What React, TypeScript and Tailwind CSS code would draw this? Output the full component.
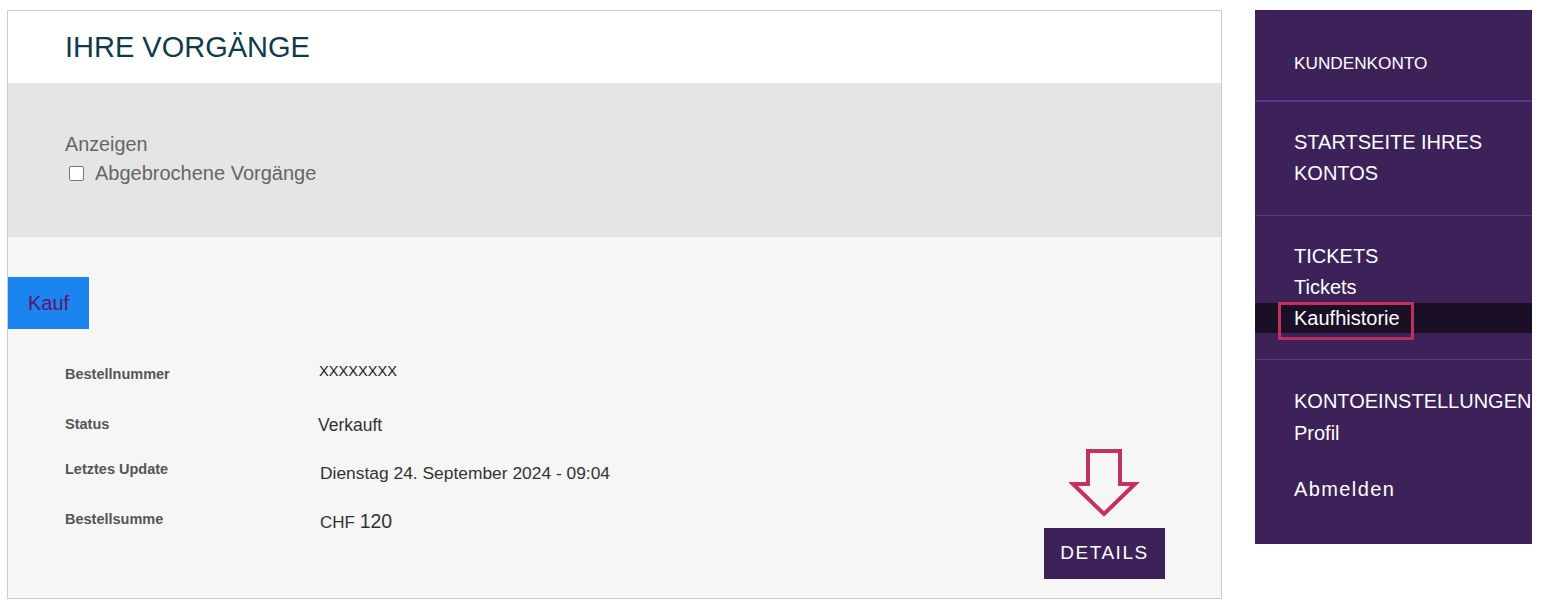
import React from "react";

const font = { fontFamily: '"Liberation Sans", Arial, sans-serif' };

function Row({
  label,
  labelTop,
  children,
}: {
  label: string;
  labelTop: string;
  children: React.ReactNode;
}) {
  return (
    <div className="flex h-[50px] items-center">
      <div className={`relative w-[253px] text-[14.5px] font-bold text-[#555555] ${labelTop}`}>{label}</div>
      <div className="text-[#333333]">{children}</div>
    </div>
  );
}

export default function App() {
  return (
    <div style={font} className="flex min-h-[607px] w-[1543px] items-start bg-white pl-[7px] pt-[10px]">
      {/* Main panel */}
      <div className="flex h-[589px] w-[1215px] flex-col border border-[#cccccc]">
        <div className="flex h-[72px] shrink-0 items-center bg-white pl-[57px]">
          <h1 className="text-[29px] leading-none text-[#0f3a4b]">IHRE VORGÄNGE</h1>
        </div>
        <div className="h-[154px] shrink-0 bg-[#e5e5e5] pl-[57px] pt-[49px] text-[19.8px] leading-[24px] text-[#666666]">
          <div>Anzeigen</div>
          <div className="mt-[5px] flex items-center">
            <span className="ml-[4px] mr-[11px] box-border inline-block h-[15px] w-[15px] rounded-[2px] border-[1.5px] border-[#767676] bg-white" />
            <span className="text-[20px]">Abgebrochene Vorgänge</span>
          </div>
        </div>
        <div className="flex flex-1 flex-col bg-[#f6f6f6] pt-[40px]">
          <div className="flex h-[52px] w-[81px] items-center justify-center bg-[#1b84ee] text-[20px] text-[#5c1670]">
            Kauf
          </div>
          <div className="flex flex-1">
            <div className="mt-[21px] pl-[57px]">
              <Row label="Bestellnummer" labelTop="top-0">
                <span className="relative top-[-4px] ml-[1px] text-[14.6px] text-[#222222]">XXXXXXXX</span>
              </Row>
              <Row label="Status" labelTop="top-0">
                <span className="text-[17.5px]">Verkauft</span>
              </Row>
              <Row label="Letztes Update" labelTop="top-[-5px]">
                <span className="relative top-[-2px] ml-[2px] text-[17.4px]">Dienstag 24. September 2024 - 09:04</span>
              </Row>
              <Row label="Bestellsumme" labelTop="top-[-5px]">
                <span className="relative top-[-3px]">
                  <span className="ml-[2px] text-[17px]">CHF </span>
                  <span className="text-[19.5px]">120</span>
                </span>
              </Row>
            </div>
            <div className="ml-auto flex flex-col items-center self-end pb-[19px] pr-[56px]">
              <svg width="72" height="72" viewBox="0 0 72 72" className="mb-[9px]">
                <path
                  d="M19 4 H51 V37 H66 L35 67 L4 37 H19 Z"
                  fill="none"
                  stroke="#c3325f"
                  strokeWidth="4"
                  strokeLinejoin="miter"
                />
              </svg>
              <div className="flex h-[51px] w-[121px] items-center justify-center bg-[#3c2258] text-[19px] tracking-[1.5px] text-white">
                DETAILS
              </div>
            </div>
          </div>
        </div>
      </div>

      {/* Sidebar */}
      <div className="ml-[33px] h-[534px] w-[277px] overflow-hidden bg-[#3c2258] text-white">
        <div className="h-[90px] pl-[39px] pt-[43px] text-[17.2px] leading-[20px]">KUNDENKONTO</div>
        <div className="h-[2px] bg-[#5a3a8e]" />
        <div className="pb-[26px] pl-[39px] pt-[25px] text-[20px] leading-[31px]">
          <div>STARTSEITE IHRES</div>
          <div>KONTOS</div>
        </div>
        <div className="h-[1px] bg-[#5a3a86]" />
        <div className="pb-[26px] pt-[25px] text-[20px] leading-[31px]">
          <div className="pl-[39px]">TICKETS</div>
          <div className="pl-[39px]">Tickets</div>
          <div className="relative h-[30px] bg-[#1a0f24] pl-[39px] leading-[30px]">
            Kaufhistorie
            <span className="pointer-events-none absolute left-[23px] top-[-1px] h-[38px] w-[136px] border-[3px] border-[#c0305e]" />
          </div>
        </div>
        <div className="h-[1px] bg-[#5a3a86]" />
        <div className="pl-[39px] pt-[26px] text-[20px] leading-[31px]">
          <div className="whitespace-nowrap">KONTOEINSTELLUNGEN</div>
          <div className="mt-[1px]">Profil</div>
          <div className="mt-[25px] tracking-[1.4px]">Abmelden</div>
        </div>
      </div>
    </div>
  );
}
